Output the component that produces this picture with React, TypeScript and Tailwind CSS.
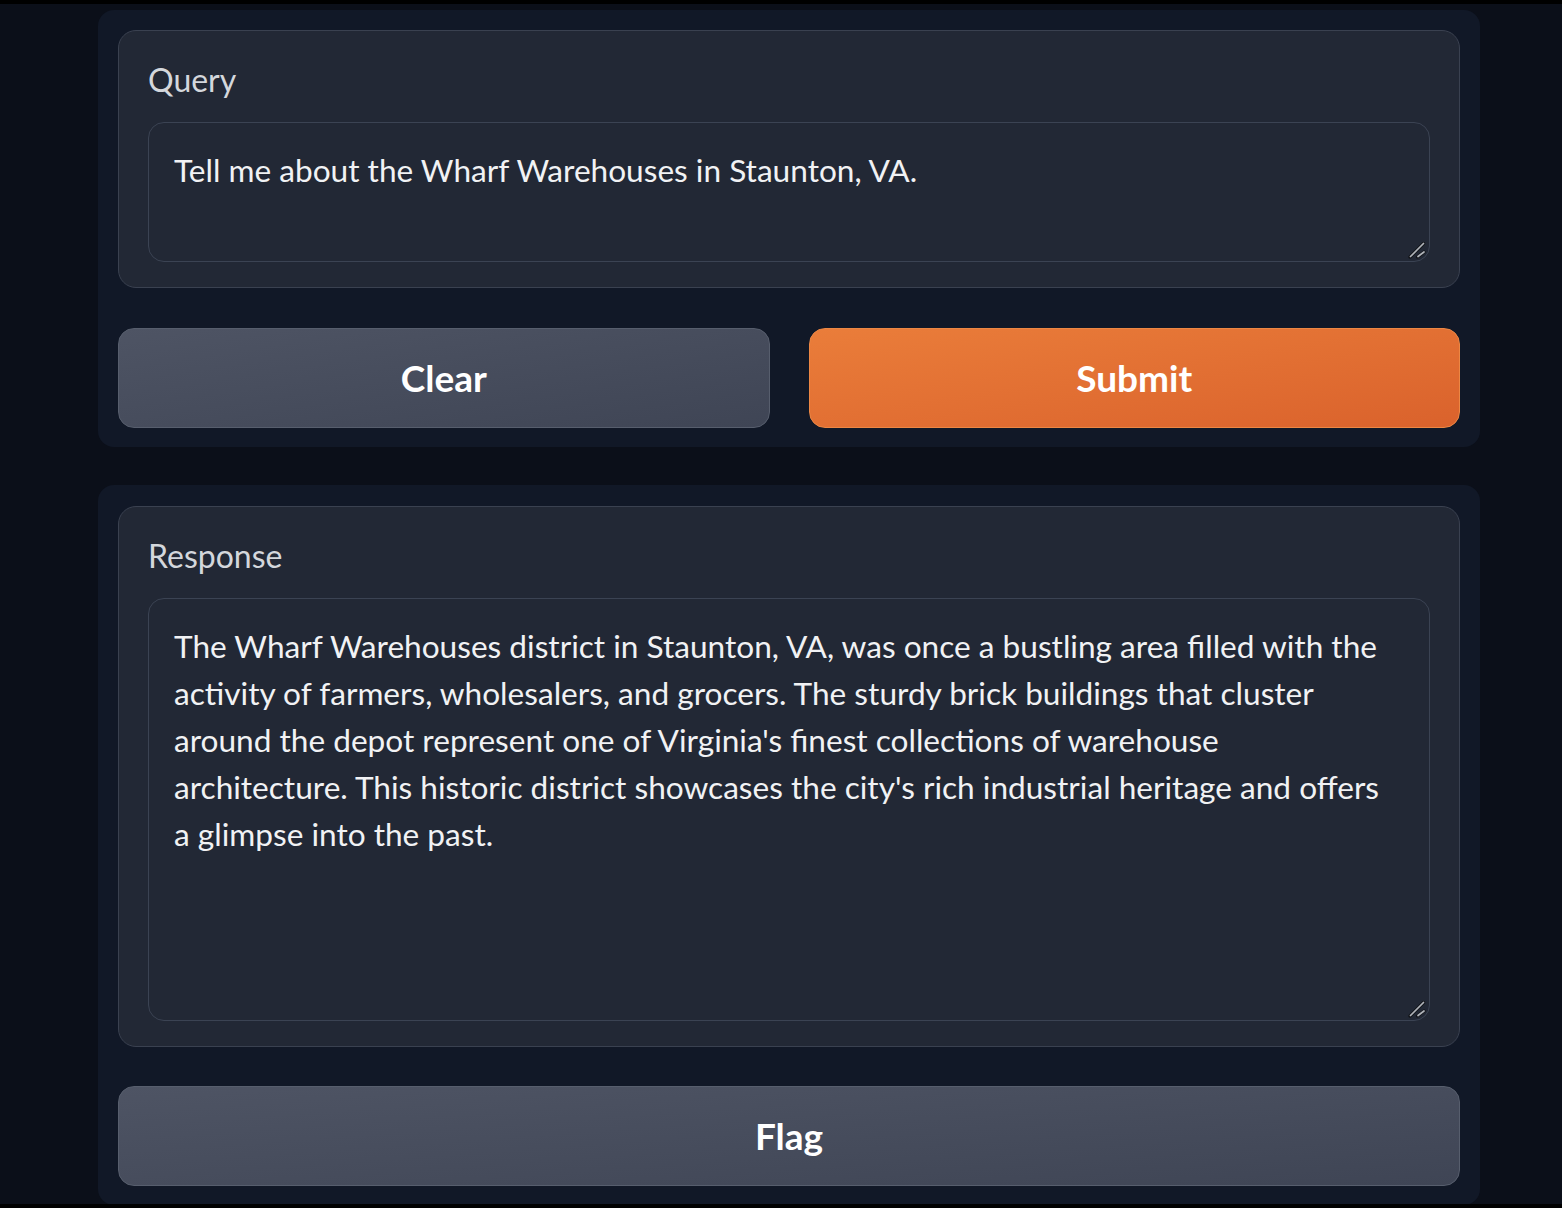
import React from "react";

const font = { fontFamily: "Lato, 'Noto Sans', sans-serif" };

function ResizeHandle() {
  return (
    <svg className="absolute right-[1px] bottom-[1px]" width="20" height="20" viewBox="0 0 20 20">
      <line x1="2" y1="17" x2="15.5" y2="3.5" stroke="#14161b" strokeWidth="3.4" strokeLinecap="round" />
      <line x1="9.5" y1="17" x2="16" y2="12" stroke="#14161b" strokeWidth="3.4" strokeLinecap="round" />
      <line x1="2.5" y1="16.5" x2="15.5" y2="3.5" stroke="#b0b4ba" strokeWidth="1.7" strokeLinecap="round" />
      <line x1="10" y1="16.5" x2="16" y2="12" stroke="#b0b4ba" strokeWidth="1.7" strokeLinecap="round" />
    </svg>
  );
}

function Block({ label, lines, height }: { label: string; lines: string[]; height: string }) {
  return (
    <div className="rounded-[18px] border border-[#3a4150] bg-[#222835] px-[29px] pt-[30px] pb-[25px]">
      <div className="text-[32px] leading-[37px] text-[#d4d7dc] mb-[24px]">{label}</div>
      <div className={`relative rounded-[16px] border border-[#3b4353] bg-[#222835] pl-[25px] pt-[24px] ${height}`}>
        {lines.map((l, i) => (
          <div key={i} className="whitespace-nowrap text-[31.6px] leading-[47px] text-[#f1f2f4]">
            {l}
          </div>
        ))}
        <ResizeHandle />
      </div>
    </div>
  );
}

export default function App() {
  return (
    <div
      className="h-[1208px] w-[1562px] overflow-hidden bg-[#0b0f19] border-t-4 border-b-4 border-black"
      style={font}
    >
      <div className="ml-[98px] w-[1382px] mt-[6px] flex flex-col gap-[38px]">
        <div className="rounded-[16px] bg-[#111827] px-[20px] pt-[20px] pb-[19px] flex flex-col gap-[40px]">
          <Block label="Query" lines={["Tell me about the Wharf Warehouses in Staunton, VA."]} height="h-[140px]" />
          <div className="flex gap-[39px]">
            <button className="flex-1 h-[100px] rounded-[16px] border border-[#575e6d] bg-gradient-to-br from-[#4e5464] to-[#3f4555] text-white font-bold text-[37px]">
              Clear
            </button>
            <button className="flex-1 h-[100px] rounded-[16px] border border-[#ec8744] bg-gradient-to-br from-[#ea7d3a] to-[#da622c] text-white font-bold text-[37px]">
              Submit
            </button>
          </div>
        </div>
        <div className="rounded-[16px] bg-[#111827] px-[20px] pt-[21px] pb-[19px] flex flex-col gap-[39px]">
          <Block
            label="Response"
            lines={[
              "The Wharf Warehouses district in Staunton, VA, was once a bustling area filled with the",
              "activity of farmers, wholesalers, and grocers. The sturdy brick buildings that cluster",
              "around the depot represent one of Virginia's finest collections of warehouse",
              "architecture. This historic district showcases the city's rich industrial heritage and offers",
              "a glimpse into the past.",
            ]}
            height="h-[423px]"
          />
          <button className="w-full h-[100px] rounded-[16px] border border-[#575e6d] bg-gradient-to-br from-[#4e5464] to-[#3f4555] text-white font-bold text-[37px]">
            Flag
          </button>
        </div>
      </div>
    </div>
  );
}
